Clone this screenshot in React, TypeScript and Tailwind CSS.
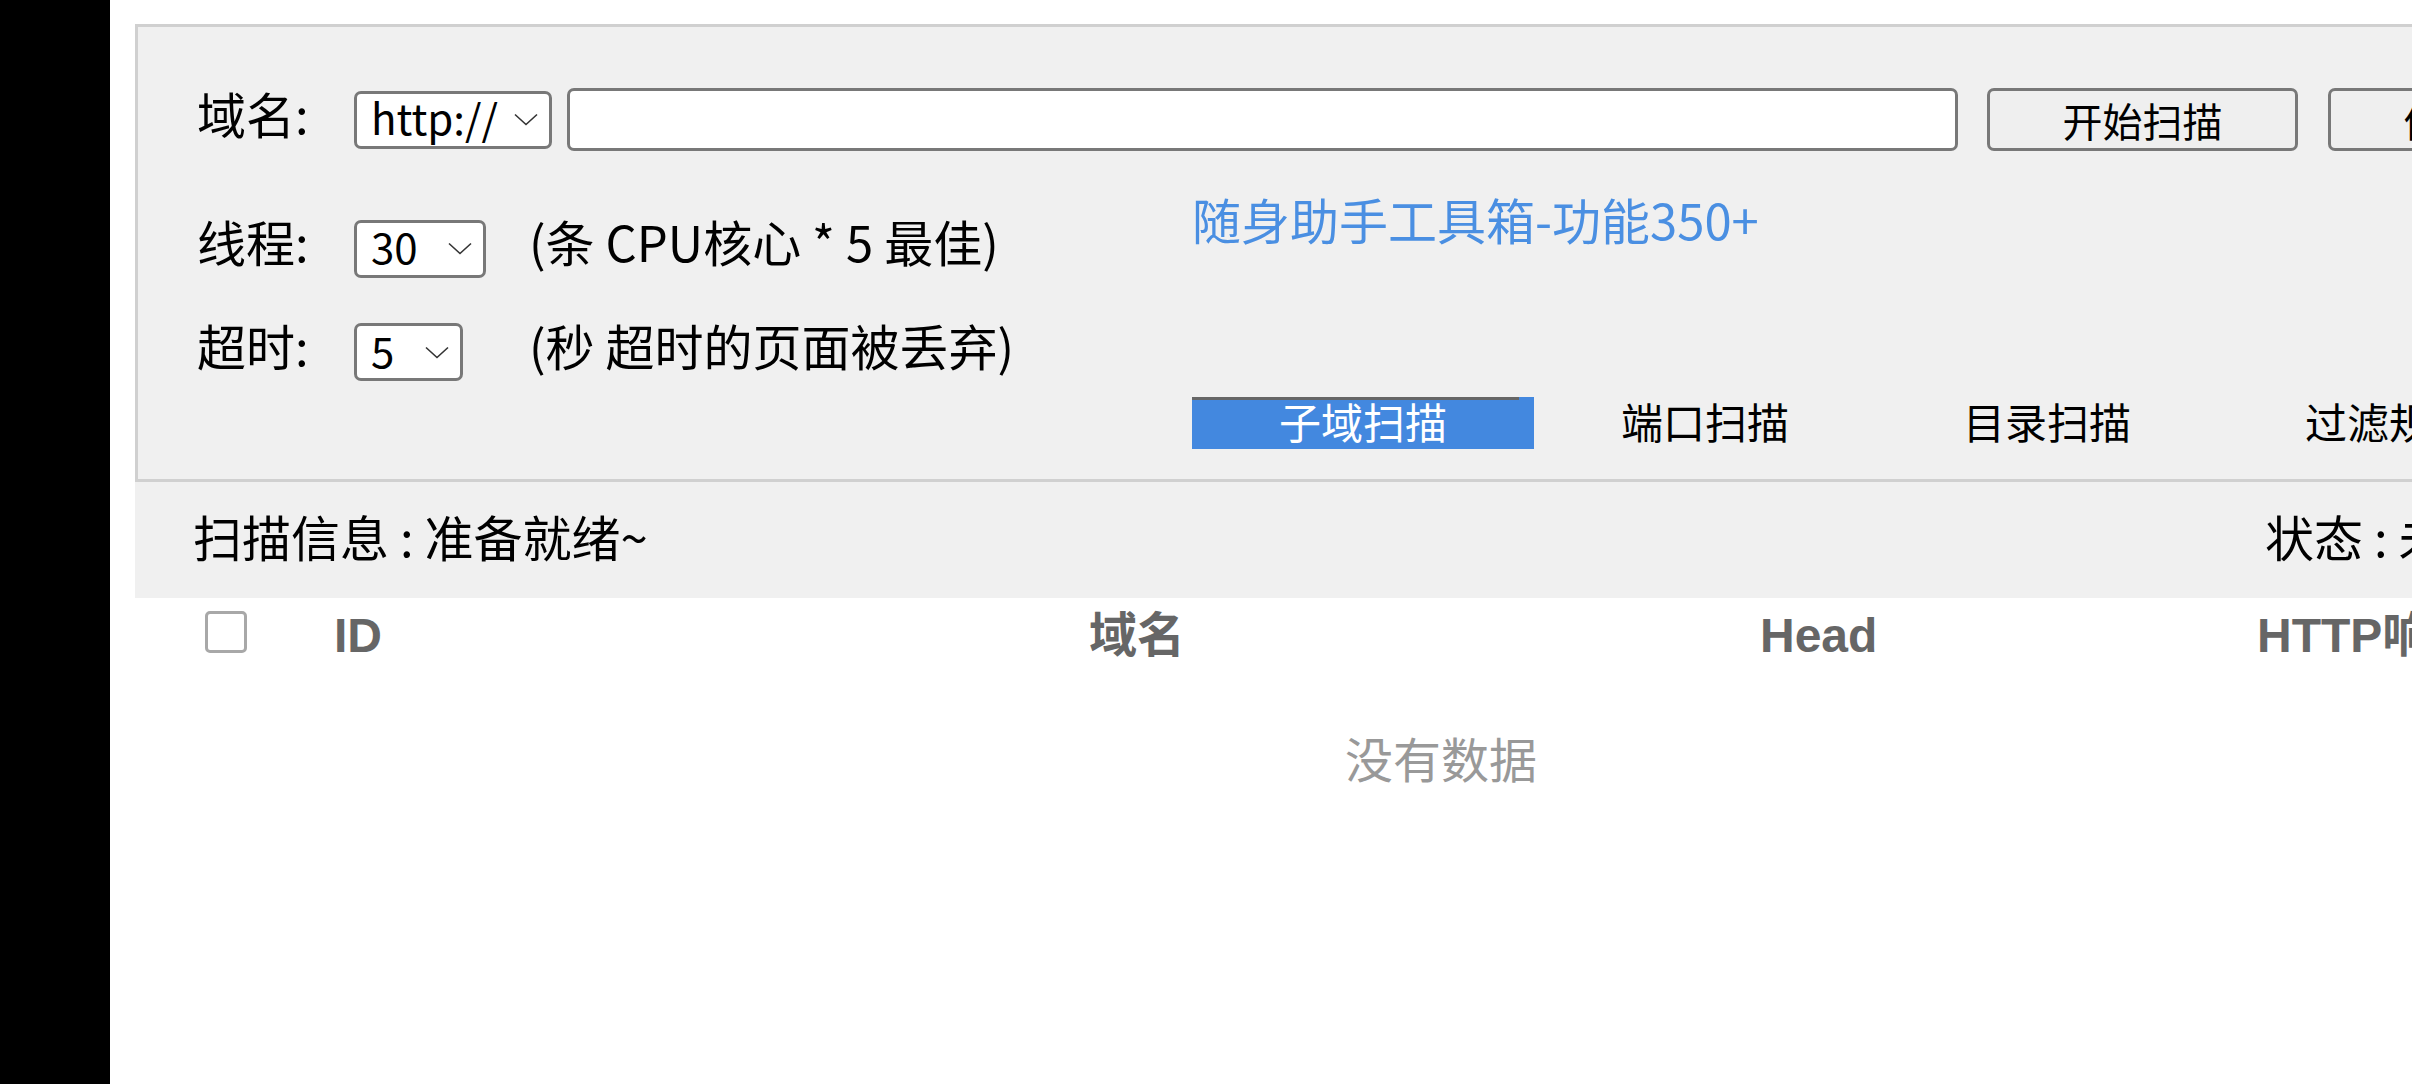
import React from 'react';

const FONT = { fontFamily: '"Noto Sans CJK SC", "Noto Sans", sans-serif' };

function Chevron() {
  return (
    <svg width="24" height="13" viewBox="0 0 24 13" fill="none" className="shrink-0">
      <path d="M1 1.5 L12 11.5 L23 1.5" stroke="#333" strokeWidth="1.6" />
    </svg>
  );
}

function FakeSelect({ value, width }: { value: string; width: string }) {
  return (
    <div
      className={`${width} h-[58px] shrink-0 flex items-center justify-between pl-[14px] pr-[11px] bg-white border-[3px] border-[#787878] rounded-[7px]`}
    >
      <span className="text-[42px] leading-none text-black mb-[5px]">{value}</span>
      <Chevron />
    </div>
  );
}

const tabs = ['子域扫描', '端口扫描', '目录扫描', '过滤规则'];

export default function App() {
  return (
    <div className="flex w-screen h-screen overflow-hidden bg-white" style={FONT}>
      <div className="w-[110px] shrink-0 h-full bg-black" />

      <div className="ml-[25px] w-[2612px] shrink-0 pt-[24px]">
        {/* top control panel */}
        <div className="h-[458px] bg-[#f0f0f0] border-[3px] border-[#d0d0d0] pl-[59px] pt-[61px]">
          <div className="flex items-center h-[63px]">
            <div className="w-[157px] shrink-0 text-[49px] leading-[56px] text-black mb-[14px]">域名:</div>
            <FakeSelect value="http://" width="w-[198px]" />
            <div className="ml-[15px] w-[1391px] h-[63px] shrink-0 bg-white border-[3px] border-[#787878] rounded-[7px]" />
            <button
              type="button"
              className="ml-[29px] w-[311px] h-[63px] shrink-0 bg-[#efefef] border-[3px] border-[#787878] rounded-[7px] text-[40px] leading-none text-black"
            >
              开始扫描
            </button>
            <button
              type="button"
              className="ml-[30px] w-[311px] h-[63px] shrink-0 bg-[#efefef] border-[3px] border-[#787878] rounded-[7px] text-[40px] leading-none text-black"
            >
              停止扫描
            </button>
          </div>

          <div className="flex">
            <div className="w-[995px] shrink-0">
              <div className="flex items-center h-[57px] mt-[69px]">
                <div className="w-[157px] shrink-0 text-[49px] leading-[56px] text-black mb-[16px]">线程:</div>
                <FakeSelect value="30" width="w-[132px]" />
                <div className="ml-[43px] text-[49px] leading-[56px] text-black mb-[16px] whitespace-pre">
                  (条 CPU核心 * 5 最佳)
                </div>
              </div>
              <div className="flex items-center h-[58px] mt-[46px]">
                <div className="w-[157px] shrink-0 text-[49px] leading-[56px] text-black mb-[14px]">超时:</div>
                <FakeSelect value="5" width="w-[109px]" />
                <div className="ml-[66px] text-[49px] leading-[56px] text-black mb-[14px] whitespace-pre">
                  (秒 超时的页面被丢弃)
                </div>
              </div>
            </div>

            <div className="shrink-0">
              <div className="mt-[40px] text-[49px] leading-[56px] text-[#4a8fe2] whitespace-nowrap">
                随身助手工具箱-功能350+
              </div>
              <div className="flex mt-[150px]">
                {tabs.map((t, i) => (
                  <div
                    key={t}
                    className={
                      i === 0
                        ? 'w-[342px] h-[52px] shrink-0 flex flex-col bg-[#4388df] text-white'
                        : 'w-[342px] h-[52px] shrink-0 flex flex-col text-black'
                    }
                  >
                    <div className={i === 0 ? 'h-[3px] w-[327px] bg-[#666]' : 'h-[3px]'} />
                    <div className="flex-1 flex items-center justify-center">
                      <span className="text-[42px] leading-none mb-[7px]">{t}</span>
                    </div>
                  </div>
                ))}
              </div>
            </div>
          </div>
        </div>

        {/* status bar */}
        <div className="h-[116px] bg-[#f0f0f0] flex items-center pl-[58px]">
          <span className="w-[2072px] shrink-0 text-[49px] leading-[56px] text-black mb-[8px] whitespace-pre">
            扫描信息 : 准备就绪~
          </span>
          <span className="text-[49px] leading-[56px] text-black mb-[8px] whitespace-pre">状态 : 未开始</span>
        </div>

        {/* table header */}
        <div
          className="h-[68px] flex items-center pl-[70px] font-bold text-[#666] text-[48px] leading-none"
          style={{ fontFamily: '"Liberation Sans", "Noto Sans CJK SC", sans-serif' }}
        >
          <div className="w-[42px] h-[42px] shrink-0 bg-white border-[3px] border-[#a8a8a8] rounded-[5px]" />
          <div className="ml-[87px] w-[755px] shrink-0 mt-[7px]">ID</div>
          <div className="w-[671px] shrink-0 mt-[7px]">域名</div>
          <div className="w-[497px] shrink-0 mt-[7px]">Head</div>
          <div className="shrink-0 whitespace-nowrap mt-[7px]">HTTP响应码</div>
        </div>

        <div className="mt-[63px] text-center text-[48px] leading-[56px] text-[#999]">没有数据</div>
      </div>
    </div>
  );
}
